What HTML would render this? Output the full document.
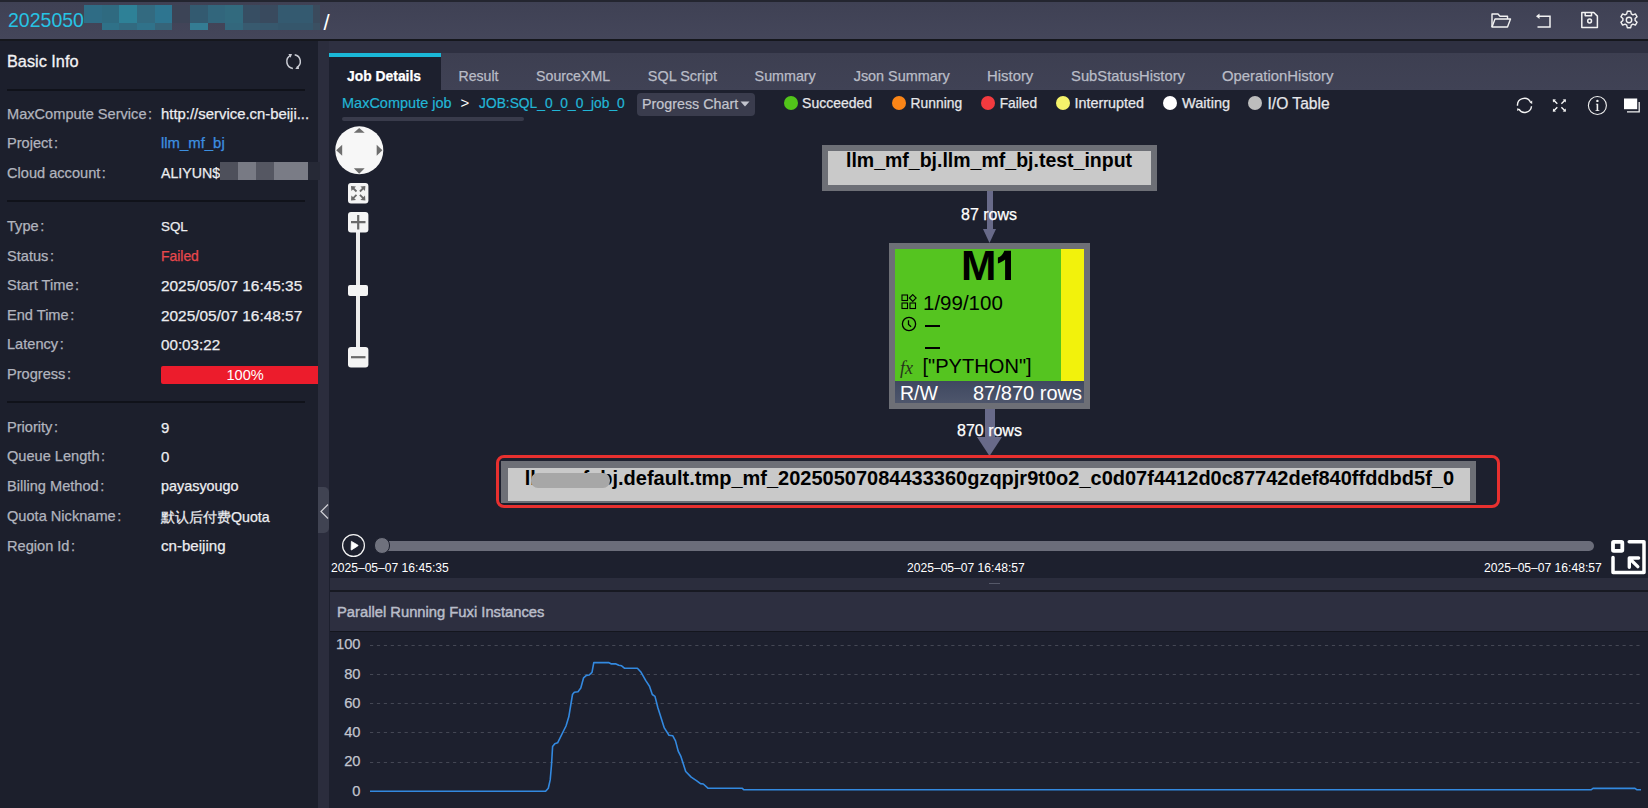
<!DOCTYPE html>
<html><head><meta charset="utf-8">
<style>
*{box-sizing:border-box;margin:0;padding:0}
html,body{width:1648px;height:808px;overflow:hidden;background:#1d202e;font-family:"Liberation Sans",sans-serif;position:relative}
.a{position:absolute;white-space:pre}
.lbl,.val,.tab,.leg{-webkit-text-stroke:0.25px currentColor}
#hdr{left:0;top:0;width:1648px;height:41px;background:linear-gradient(#3f4154,#44465a);border-top:2px solid #23252f;border-bottom:2px solid #15171d}
#left{left:0;top:41px;width:318px;height:767px;background:#1c1f2c}
#stripe{left:318px;top:41px;width:11px;height:768px;background:#2b2d3d}
#tabband{left:329px;top:41px;width:1319px;height:12px;background:#2e3041}
#tabs{left:441px;top:53px;width:1207px;height:37px;background:linear-gradient(#3d3f51,#404255)}
#acttab{left:329px;top:53px;width:112px;height:37px;background:#1d202e;border-top:4px solid #1ab8d8}
.tab{font-size:14px;color:#b9bcc6;top:68px}
.lbl{font-size:14.6px;color:#b1b4be;left:7px}
.val{font-size:14px;color:#ecedf0;left:161px}
.div{left:7px;width:298px;height:2px;background:#10121a}
.leg{font-size:14px;color:#e6e7ea;top:96px}
.dot{width:14px;height:14px;border-radius:50%;top:96px}
</style></head><body>
<div id="hdr" class="a"></div>
<div id="left" class="a"></div>
<div id="stripe" class="a"></div>
<div id="tabband" class="a"></div>
<div id="tabs" class="a"></div>
<div id="acttab" class="a"></div>

<!-- header title -->
<div class="a" style="left:84px;top:5px;width:18px;height:18px;background:#2f6c85"></div>
<div class="a" style="left:102px;top:5px;width:17px;height:18px;background:#2f6a80"></div>
<div class="a" style="left:119px;top:5px;width:18px;height:18px;background:#2e8197"></div>
<div class="a" style="left:137px;top:5px;width:18px;height:18px;background:#336a80"></div>
<div class="a" style="left:155px;top:5px;width:17px;height:18px;background:#2e7590"></div>
<div class="a" style="left:172px;top:5px;width:18px;height:18px;background:#3c4456"></div>
<div class="a" style="left:190px;top:5px;width:18px;height:18px;background:#335a70"></div>
<div class="a" style="left:208px;top:5px;width:17px;height:18px;background:#32667c"></div>
<div class="a" style="left:225px;top:5px;width:18px;height:18px;background:#326a7e"></div>
<div class="a" style="left:243px;top:5px;width:17px;height:18px;background:#374e63"></div>
<div class="a" style="left:260px;top:5px;width:18px;height:18px;background:#394a5e"></div>
<div class="a" style="left:278px;top:5px;width:35px;height:18px;background:#345a70"></div>
<div class="a" style="left:313px;top:5px;width:7px;height:18px;background:#3b4a5c"></div>
<div class="a" style="left:102px;top:23px;width:17px;height:7px;background:#2f7188"></div>
<div class="a" style="left:119px;top:23px;width:18px;height:7px;background:#326a80"></div>
<div class="a" style="left:137px;top:23px;width:18px;height:7px;background:#30728a"></div>
<div class="a" style="left:155px;top:23px;width:17px;height:7px;background:#366479"></div>
<div class="a" style="left:190px;top:23px;width:18px;height:7px;background:#347c93"></div>
<div class="a" style="left:225px;top:23px;width:18px;height:7px;background:#33677c"></div>
<div class="a" style="left:243px;top:23px;width:17px;height:7px;background:#385a6f"></div>
<div class="a" style="left:260px;top:23px;width:18px;height:7px;background:#37586d"></div>
<div class="a" style="left:278px;top:23px;width:35px;height:7px;background:#35566b"></div>
<div class="a" style="left:313px;top:23px;width:7px;height:7px;background:#3b5062"></div>
<div class="a" style="left:323.5px;top:9.5px;font-size:22px;color:#fff">/</div>
<svg class="a" style="left:1490px;top:12px" width="22" height="17" viewBox="0 0 22 17" fill="none" stroke="#f2f2f2" stroke-width="1.4" stroke-linejoin="round">
<path d="M2 15V2h6l2 2.2h7.5V7"/><path d="M2 15l3-8h15.5l-3 8z"/>
</svg>
<svg class="a" style="left:1534px;top:12px" width="18" height="17" viewBox="0 0 18 17" fill="none" stroke="#f2f2f2" stroke-width="1.5">
<path d="M4.5 4.2h11.5v10.8H3.5"/><polygon points="2,4.2 5.5,1.5 5.5,7" fill="#f2f2f2" stroke="none"/>
</svg>
<svg class="a" style="left:1580px;top:11px" width="19" height="18" viewBox="0 0 19 18" fill="none" stroke="#f2f2f2" stroke-width="1.5" stroke-linejoin="round">
<path d="M1.8 1.5h12l3.6 3.6v11.4H1.8z"/><path d="M5.2 1.5v3.2h6.3V1.5"/><circle cx="9.6" cy="10" r="1.9"/>
</svg>
<svg class="a" style="left:1619px;top:10px" width="20" height="20" viewBox="0 0 20 20" fill="none" stroke="#f2f2f2" stroke-width="1.4" stroke-linejoin="round">
<path d="M8.3 1.3h3.4l0.6 2.6 1.6 0.9 2.5-0.9 1.7 2.9-2 1.8v1.8l2 1.8-1.7 2.9-2.5-0.9-1.6 0.9-0.6 2.6H8.3l-0.6-2.6-1.6-0.9-2.5 0.9-1.7-2.9 2-1.8V8.6l-2-1.8 1.7-2.9 2.5 0.9 1.6-0.9z"/>
<circle cx="10" cy="10" r="2.7"/>
</svg>

<div class="a" style="left:8px;top:9px;font-size:19.5px;color:#27c3e4">2025050</div>

<!-- left panel -->
<div class="a" style="left:7px;top:52px;font-size:16.3px;color:#f2f2f4;-webkit-text-stroke:0.3px #f2f2f4">Basic Info</div>
<svg class="a" style="left:285px;top:53px" width="18" height="18" viewBox="0 0 18 18">
<g fill="none" stroke="#c9cbd3" stroke-width="1.5"><path d="M5.6 2.4A6.9 6.9 0 0 0 7.9 15.4"/><path d="M9.7 1.7A6.9 6.9 0 0 1 11.6 14.6"/></g>
<g fill="#c9cbd3"><polygon points="3.4,1.1 7,1.1 5.6,4.8"/><polygon points="10.2,15.9 14,15.9 13.6,12.2"/></g>
</svg>
<div class="a div" style="top:89px"></div>

<div class="a lbl" style="top:105.9px">MaxCompute Service<span style="margin-left:1.5px">:</span></div>
<div class="a val" style="top:105.8px;font-size:14.9px">http://service.cn-beiji...</div>
<div class="a lbl" style="top:135.1px">Project<span style="margin-left:1.5px">:</span></div>
<div class="a val" style="top:135.0px;font-size:14.9px;color:#3d8fe0">llm_mf_bj</div>
<div class="a lbl" style="top:164.6px">Cloud account<span style="margin-left:1.5px">:</span></div>
<div class="a val" style="top:164.7px;font-size:14.2px">ALIYUN$</div>
<div class="a lbl" style="top:218.4px">Type<span style="margin-left:1.5px">:</span></div>
<div class="a val" style="top:218.7px;font-size:13.4px">SQL</div>
<div class="a lbl" style="top:247.9px">Status<span style="margin-left:1.5px">:</span></div>
<div class="a val" style="top:248.1px;font-size:13.9px;color:#e8484c">Failed</div>
<div class="a lbl" style="top:277.4px">Start Time<span style="margin-left:1.5px">:</span></div>
<div class="a val" style="top:277.2px;font-size:15.4px">2025/05/07 16:45:35</div>
<div class="a lbl" style="top:306.9px">End Time<span style="margin-left:1.5px">:</span></div>
<div class="a val" style="top:306.7px;font-size:15.4px">2025/05/07 16:48:57</div>
<div class="a lbl" style="top:336.4px">Latency<span style="margin-left:1.5px">:</span></div>
<div class="a val" style="top:336.3px;font-size:15.2px">00:03:22</div>
<div class="a lbl" style="top:365.9px">Progress<span style="margin-left:1.5px">:</span></div>
<div class="a" style="left:161px;top:366.3px;width:157px;height:18.1px;background:#ec1c2c;border-radius:2px 0 0 2px"></div>
<div class="a" style="left:226.5px;top:367.4px;font-size:14.6px;color:#fff">100%</div>
<div class="a lbl" style="top:418.6px">Priority<span style="margin-left:1.5px">:</span></div>
<div class="a val" style="top:418.5px;font-size:15px">9</div>
<div class="a lbl" style="top:448.4px">Queue Length<span style="margin-left:1.5px">:</span></div>
<div class="a val" style="top:448.3px;font-size:15px">0</div>
<div class="a lbl" style="top:478.1px">Billing Method<span style="margin-left:1.5px">:</span></div>
<div class="a val" style="top:478.1px;font-size:14.4px">payasyougo</div>
<div class="a lbl" style="top:507.8px">Quota Nickname<span style="margin-left:1.5px">:</span></div>
<div class="a val" style="top:507.9px;font-size:14.2px">默认后付费Quota</div>
<div class="a lbl" style="top:537.5px">Region Id<span style="margin-left:1.5px">:</span></div>
<div class="a val" style="top:537.4px;font-size:15.1px">cn-beijing</div>
<div class="a div" style="top:200px"></div>
<div class="a div" style="top:401px"></div>
<div class="a" style="left:220px;top:162px;width:18px;height:18px;background:#4e505b"></div>
<div class="a" style="left:238px;top:162px;width:18px;height:18px;background:#787a84"></div>
<div class="a" style="left:256px;top:162px;width:18px;height:18px;background:#555762"></div>
<div class="a" style="left:274px;top:162px;width:34px;height:18px;background:#7a7c86"></div>
<div class="a" style="left:308px;top:162px;width:12px;height:18px;background:#262936"></div>
<div class="a" style="left:318px;top:487px;width:11px;height:46px;background:#404352;border-radius:0 5px 5px 0"></div>
<svg class="a" style="left:319px;top:503px" width="11" height="17" viewBox="0 0 11 17" fill="none" stroke="#d0d0d6" stroke-width="1.2"><path d="M9 1.5L2 8.5l7 7"/></svg>
<!-- tabs -->
<div class="a tab" style="left:347.1px;top:67.7px;font-size:13.87px;color:#fff;font-weight:bold">Job Details</div>
<div class="a tab" style="left:458.5px;top:67.6px;font-size:14.14px">Result</div>
<div class="a tab" style="left:536.1px;top:67.6px;font-size:14.16px">SourceXML</div>
<div class="a tab" style="left:647.8px;top:68.3px;font-size:14.44px">SQL Script</div>
<div class="a tab" style="left:754.6px;top:67.6px;font-size:14.31px">Summary</div>
<div class="a tab" style="left:853.7px;top:67.5px;font-size:14.41px">Json Summary</div>
<div class="a tab" style="left:987.1px;top:67.7px;font-size:14.85px">History</div>
<div class="a tab" style="left:1071.1px;top:67.7px;font-size:14.74px">SubStatusHistory</div>
<div class="a tab" style="left:1222.0px;top:67.7px;font-size:14.87px">OperationHistory</div>
<!-- breadcrumb -->
<div class="a" style="left:342px;top:95px;font-size:14.5px;color:#22b6d6;-webkit-text-stroke:0.2px #22b6d6">MaxCompute job</div>
<div class="a" style="left:460.5px;top:94px;font-size:15px;color:#fff">&gt;</div>
<div class="a" style="left:479px;top:96px;font-size:13.8px;color:#22b6d6;-webkit-text-stroke:0.2px #22b6d6">JOB:SQL_0_0_0_job_0</div>
<div class="a" style="left:342px;top:117px;width:182px;height:4px;background:#393b4b;border-radius:2px"></div>
<div class="a" style="left:637px;top:93px;width:118px;height:23px;background:#3a3c4d;border-radius:4px"></div>
<div class="a" style="left:642px;top:95.5px;font-size:14.3px;color:#c3c5ce;-webkit-text-stroke:0.2px #c3c5ce">Progress Chart</div>
<svg class="a" style="left:740px;top:101px" width="10" height="6"><polygon points="0.5,0.5 9.5,0.5 5,5.5" fill="#c3c5ce"/></svg>

<!-- legend -->
<div class="a dot" style="left:783.7px;top:96px;background:#52c41a"></div>
<div class="a leg" style="left:802.1px;top:95.3px;font-size:13.99px">Succeeded</div>
<div class="a dot" style="left:891.6px;top:96px;background:#fb8517"></div>
<div class="a leg" style="left:910.6px;top:95.4px;font-size:13.83px">Running</div>
<div class="a dot" style="left:980.5px;top:96px;background:#f23a3f"></div>
<div class="a leg" style="left:999.7px;top:96.4px;font-size:13.73px">Failed</div>
<div class="a dot" style="left:1055.5px;top:96px;background:#f5f36b"></div>
<div class="a leg" style="left:1074.6px;top:95.2px;font-size:14.37px">Interrupted</div>
<div class="a dot" style="left:1163px;top:96px;background:#ffffff"></div>
<div class="a leg" style="left:1182.1px;top:95.2px;font-size:14.55px">Waiting</div>
<div class="a dot" style="left:1248px;top:96px;background:#bdbdbd"></div>
<div class="a leg" style="left:1267.5px;top:95.1px;font-size:15.6px">I/O Table</div>
<!-- GRAPH -->
<!-- zoom controls -->
<svg class="a" style="left:335px;top:126px" width="49" height="50" viewBox="0 0 49 50">
<circle cx="24.3" cy="24.3" r="24" fill="#f7f7f7"/>
<polygon points="24.2,2 18.8,6.8 29.7,6.8" fill="#6e6e6e"/>
<polygon points="24.2,47.7 18.8,42.2 29.7,42.2" fill="#6e6e6e"/>
<polygon points="1.2,24.2 7.2,18.8 7.2,29.7" fill="#6e6e6e"/>
<polygon points="47.4,24.2 41.7,18.8 41.7,29.7" fill="#6e6e6e"/>
</svg>
<div class="a" style="left:356px;top:230px;width:4px;height:120px;background:#ececec"></div>
<svg class="a" style="left:348px;top:183px" width="21" height="21" viewBox="0 0 21 21">
<rect x="0" y="0" width="20.4" height="20.4" rx="3" fill="#f4f4f4"/>
<g stroke="#6a6a6a" stroke-width="1.8" fill="none"><path d="M4.5 4.5l4 4M15.9 4.5l-4 4M4.5 15.9l4-4M15.9 15.9l-4-4"/></g>
<g fill="#6a6a6a"><polygon points="3,3 8,3.4 3.4,8"/><polygon points="17.4,3 12.4,3.4 17,8"/><polygon points="3,17.4 8,17 3.4,12.4"/><polygon points="17.4,17.4 12.4,17 17,12.4"/></g>
</svg>
<svg class="a" style="left:348px;top:212px" width="21" height="21" viewBox="0 0 21 21">
<rect x="0" y="0" width="20.4" height="20.4" rx="3" fill="#f4f4f4"/>
<path d="M10.2 3v14.5M3 10.2h14.5" stroke="#6a6a6a" stroke-width="2.2"/>
</svg>
<div class="a" style="left:348px;top:285px;width:20.4px;height:11.3px;border-radius:2px;background:#f4f4f4"></div>
<svg class="a" style="left:348px;top:347px" width="21" height="21" viewBox="0 0 21 21">
<rect x="0" y="0" width="20.4" height="20.4" rx="3" fill="#f4f4f4"/>
<path d="M3 10.2h14.5" stroke="#6a6a6a" stroke-width="2.2"/>
</svg>

<!-- toolbar right -->
<svg class="a" style="left:1512px;top:92px" width="60" height="28" viewBox="0 0 60 28">
<g fill="none" stroke="#f4f4f4" stroke-width="1.4">
<path d="M5.5 13.8A6.9 6.9 0 0 1 18.4 9.9"/><path d="M19.5 14.2A6.9 6.9 0 0 1 6.8 17.2"/>
<path d="M45.3 11.8L41.8 8.3M49.4 11.8L52.9 8.3M45.3 15.2L41.8 18.7M49.4 15.2L52.9 18.7"/>
</g>
<g fill="#f4f4f4">
<polygon points="17.6,10.6 20.2,8.6 20.2,12"/><polygon points="5.2,16.3 8.3,17.3 5.2,18.9"/>
<polygon points="40.8,7.2 44,7.4 41,10.4"/><polygon points="53.9,7.2 50.7,7.4 53.7,10.4"/>
<polygon points="40.8,19.8 44,19.6 41,16.6"/><polygon points="53.9,19.8 50.7,19.6 53.7,16.6"/>
</g>
</svg>
<svg class="a" style="left:1587px;top:95px" width="21" height="21" viewBox="0 0 21 21">
<circle cx="10.4" cy="10.5" r="9" fill="none" stroke="#f0f0f0" stroke-width="1.1"/>
<circle cx="10.4" cy="5.9" r="1.2" fill="#f0f0f0"/>
<path d="M8.9 8.7h2.3v6.5h1.1v0.8h-3.8v-0.8h1.1v-5.8h-0.7z" fill="#f0f0f0"/>
</svg>
<svg class="a" style="left:1623px;top:98px" width="18" height="16" viewBox="0 0 18 16">
<path d="M4 13.8h12.2V4" fill="none" stroke="#f2f2f2" stroke-width="1.3"/>
<rect x="1" y="0.5" width="13.2" height="10.7" fill="#fff"/>
</svg>

<!-- nodes -->
<div class="a" style="left:822px;top:145px;width:335px;height:46px;background:#6d6f76"></div>
<div class="a" style="left:828px;top:151px;width:323px;height:34px;background:#c9c9c9"></div>
<div class="a" style="left:846px;top:149px;font-size:19.5px;font-weight:bold;color:#000">llm_mf_bj.llm_mf_bj.test_input</div>

<div class="a" style="left:987px;top:191px;width:5.5px;height:40px;background:#686a89"></div>
<svg class="a" style="left:982px;top:229px" width="15" height="14"><polygon points="1,0 14,0 7.5,14" fill="#686a89"/></svg>
<div class="a" style="left:961px;top:205.5px;font-size:16px;color:#fff;-webkit-text-stroke:0.25px #fff">87 rows</div>

<div class="a" style="left:888.5px;top:243px;width:201.5px;height:166px;background:#6d6f76"></div>
<div class="a" style="left:894.5px;top:249px;width:166.5px;height:132px;background:#55c420"></div>
<div class="a" style="left:1061px;top:249px;width:23px;height:132px;background:#f2f20c"></div>
<div class="a" style="left:894.5px;top:381px;width:189.5px;height:22px;background:linear-gradient(#3f4860,#4e566c)"></div>
<div class="a" style="left:961px;top:242px;font-size:42.5px;font-weight:bold;color:#000">M</div>
<svg class="a" style="left:990px;top:245px" width="30" height="40" viewBox="990 245 30 40"><path d="M1004.3 250.8H1011V280.1H1005.1V259.6C1003 261.2 1000.6 262.6 997.9 263.5V257.6C1000.9 256.4 1003.2 254.2 1004.3 250.8Z" fill="#000"/></svg>
<svg class="a" style="left:901px;top:294px" width="16" height="16" viewBox="0 0 16 16" fill="none" stroke="#000" stroke-width="1.1">
<rect x="1" y="1" width="5.5" height="5.5"/><rect x="1" y="9" width="5.5" height="5.5"/><rect x="9" y="9" width="5.5" height="5.5"/><path d="M11.75 0.6l3.4 3.4-3.4 3.4-3.4-3.4z"/>
</svg>
<div class="a" style="left:923px;top:291px;font-size:20.5px;color:#000">1/99/100</div>
<svg class="a" style="left:901px;top:316px" width="16" height="16" viewBox="0 0 16 16" fill="none" stroke="#000" stroke-width="1.3">
<circle cx="8" cy="8" r="6.6"/><path d="M7.5 4.2v4.3l2.6 2.3"/>
</svg>
<div class="a" style="left:925px;top:325px;width:15px;height:2px;background:#000"></div>
<div class="a" style="left:925px;top:346.5px;width:15px;height:2px;background:#000"></div>
<div class="a" style="left:900px;top:358px;font-size:18px;font-style:italic;font-family:'Liberation Serif',serif;color:#26331c">fx</div>
<div class="a" style="left:922.5px;top:355px;font-size:20.1px;color:#000">["PYTHON"]</div>
<div class="a" style="left:900px;top:382px;font-size:19.5px;color:#fff">R/W</div>
<div class="a" style="left:973px;top:382px;font-size:20px;color:#fff">87/870 rows</div>

<div class="a" style="left:984.5px;top:409px;width:10px;height:29px;background:#686a89"></div>
<svg class="a" style="left:977px;top:437px" width="25" height="19"><polygon points="0,0 25,0 12.5,19" fill="#686a89"/></svg>
<div class="a" style="left:957px;top:421.8px;font-size:16px;color:#fff;-webkit-text-stroke:0.25px #fff">870 rows</div>

<div class="a" style="left:501px;top:461px;width:975px;height:42px;background:#6d6f76"></div>
<div class="a" style="left:508px;top:467.5px;width:962px;height:33.5px;background:#c9c9c9"></div>
<div class="a" style="left:524.7px;top:466.5px;font-size:20px;font-weight:bold;color:#000">llm_mf_bj.default.tmp_mf_20250507084433360gzqpjr9t0o2_c0d07f4412d0c87742def840ffddbd5f_0</div>
<div class="a" style="left:531px;top:473px;width:79px;height:14.5px;background:#a7a7a7;border-radius:7px;filter:blur(0.6px)"></div>
<div class="a" style="left:496px;top:455px;width:1004px;height:53px;border:3px solid #e8302f;border-radius:8px"></div>


<!-- TIMELINE -->
<svg class="a" style="left:341px;top:533px" width="25" height="25" viewBox="0 0 25 25">
<circle cx="12.5" cy="12.5" r="10.9" fill="none" stroke="#f4f4f4" stroke-width="1.2"/>
<path d="M10.4 8.6Q10 8.2 10.5 8.4L16.8 12.1Q17.3 12.5 16.8 12.9L10.5 16.9Q10 17.1 10.1 16.5Z" fill="#fff" stroke="#fff" stroke-width="0.8" stroke-linejoin="round"/>
</svg>
<div class="a" style="left:376px;top:541px;width:1218px;height:9.5px;background:#6b6d7a;border-radius:5px"></div>
<div class="a" style="left:373.8px;top:537.4px;width:16.4px;height:16.4px;background:#6f717d;border-radius:50%;border:1.2px solid #1d202e"></div>
<div class="a" style="left:331px;top:561px;font-size:12.1px;color:#fff">2025–05–07 16:45:35</div>
<div class="a" style="left:907px;top:561px;font-size:12.1px;color:#fff">2025–05–07 16:48:57</div>
<div class="a" style="left:1484px;top:561px;font-size:12.1px;color:#fff">2025–05–07 16:48:57</div>
<svg class="a" style="left:1610px;top:539px" width="38" height="38" viewBox="0 0 38 38" fill="none" stroke="#fff" stroke-linecap="round" stroke-linejoin="round">
<rect x="3" y="2.9" width="9.3" height="9" rx="0.8" stroke-width="3.8"/>
<path d="M19.2 2.7H34V33.5H3V18.6" stroke-width="3.5"/>
<path d="M20 20L27.8 27.6M28.6 19H19.3V28.3" stroke-width="3.4"/>
</svg>
<div class="a" style="left:330px;top:578px;width:1318px;height:12px;background:#2b2d3d"></div>
<div class="a" style="left:989px;top:583px;width:11px;height:1px;background:#555868"></div>
<div class="a" style="left:330px;top:590px;width:1318px;height:2px;background:#171922"></div>


<!-- CHART -->
<div class="a" style="left:330px;top:592px;width:1318px;height:40px;background:#2d2f40;border-bottom:1.5px solid #14161e"></div>
<div class="a" style="left:337px;top:604px;font-size:14.75px;color:#b9bdc9;-webkit-text-stroke:0.45px #b9bdc9">Parallel Running Fuxi Instances</div>


<div class="a" style="left:300px;width:60.5px;text-align:right;-webkit-text-stroke:0.25px #c2c5ce;top:636.2px;font-size:14.7px;color:#c2c5ce">100</div>
<div class="a" style="left:300px;width:60.5px;text-align:right;-webkit-text-stroke:0.25px #c2c5ce;top:665.5px;font-size:14.7px;color:#c2c5ce">80</div>
<div class="a" style="left:300px;width:60.5px;text-align:right;-webkit-text-stroke:0.25px #c2c5ce;top:694.8px;font-size:14.7px;color:#c2c5ce">60</div>
<div class="a" style="left:300px;width:60.5px;text-align:right;-webkit-text-stroke:0.25px #c2c5ce;top:724.1px;font-size:14.7px;color:#c2c5ce">40</div>
<div class="a" style="left:300px;width:60.5px;text-align:right;-webkit-text-stroke:0.25px #c2c5ce;top:753.4px;font-size:14.7px;color:#c2c5ce">20</div>
<div class="a" style="left:300px;width:60.5px;text-align:right;-webkit-text-stroke:0.25px #c2c5ce;top:782.7px;font-size:14.7px;color:#c2c5ce">0</div>
<svg class="a" style="left:0;top:0" width="1648" height="808">
<g stroke="#444754" stroke-width="1" stroke-dasharray="3.2 3.72"><line x1="370" y1="645.5" x2="1641" y2="645.5"/><line x1="370" y1="674.5" x2="1641" y2="674.5"/><line x1="370" y1="703.5" x2="1641" y2="703.5"/><line x1="370" y1="732.5" x2="1641" y2="732.5"/><line x1="370" y1="762.5" x2="1641" y2="762.5"/></g>
<path d="M370.0,791.2 L545.6,791.2 L548.3,788.2 L550.2,779.9 L551.5,765.0 L552.6,746.5 L554.8,743.7 L557.6,742.8 L566.0,726.0 L568.8,716.8 L572.5,694.5 L574.3,692.3 L578.0,691.7 L580.8,688.0 L583.6,677.8 L586.4,675.4 L589.2,675.0 L592.0,672.3 L593.8,662.6 L608.6,662.6 L611.4,663.9 L616.0,663.9 L618.8,665.2 L621.6,665.8 L624.4,668.2 L637.4,668.2 L641.1,672.3 L645.8,680.6 L649.5,686.2 L652.3,694.5 L655.0,696.4 L657.8,707.5 L664.3,727.9 L669.0,735.3 L672.7,735.7 L675.5,740.9 L678.2,751.1 L681.0,756.7 L685.7,771.5 L691.2,777.1 L696.8,780.8 L700.5,783.6 L703.3,784.0 L707.9,788.2 L742.0,788.2 L744.0,789.8 L1591.0,789.8 L1593.0,788.4 L1635.0,788.4 L1637.0,789.8 L1641.0,789.8" fill="none" stroke="#3389e0" stroke-width="1.6" stroke-linejoin="round"/>
</svg>
</body></html>
